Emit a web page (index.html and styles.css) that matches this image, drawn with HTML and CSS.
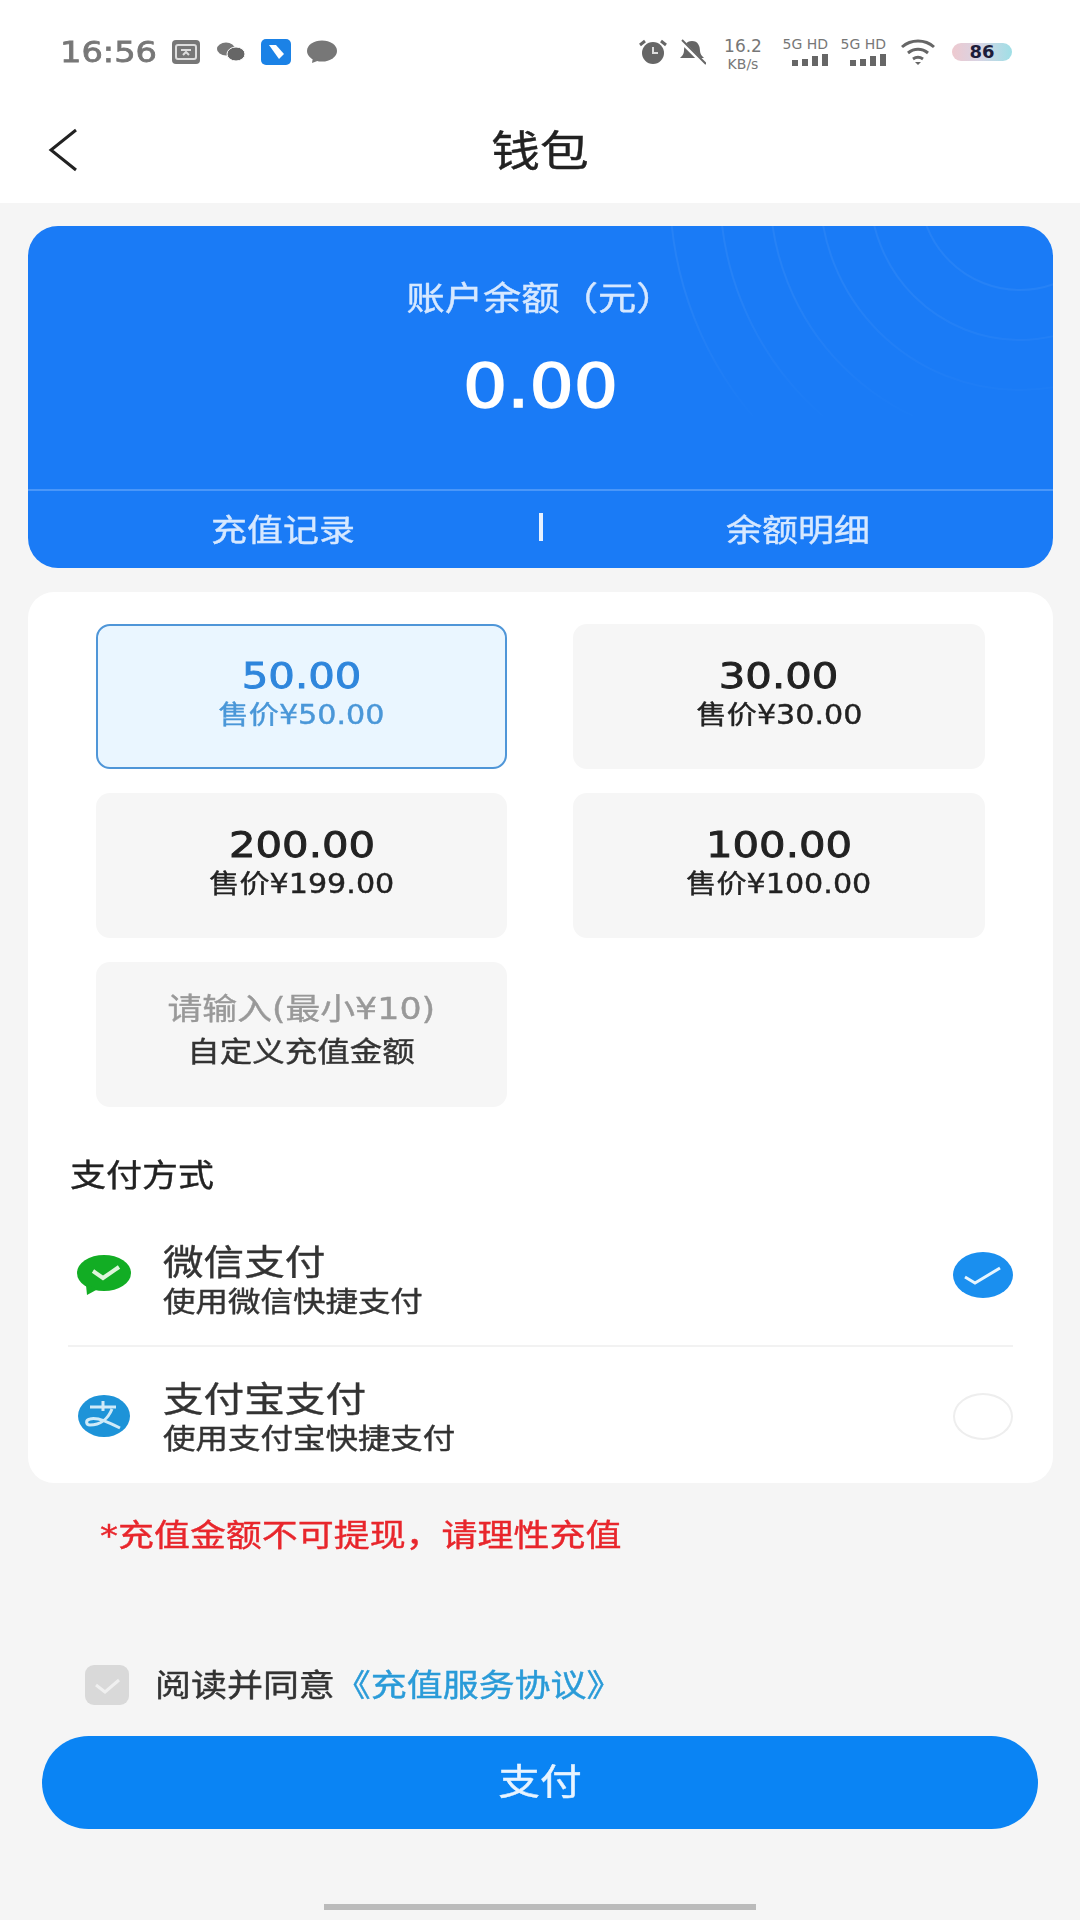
FILE: index.html
```html
<!DOCTYPE html>
<html lang="zh-CN">
<head>
    <meta charset="UTF-8">
    <meta name="viewport" content="width=device-width, initial-scale=1.0">
    <title>钱包</title>
    <link rel="stylesheet" href="styles.css">
</head>
<body>
    <!-- status bar -->
    <div class="status">
        <div class="status-left">
            <span class="time wide">16:56</span>
            <svg width="30" height="26" viewBox="0 0 30 26"><rect x="1" y="1" width="28" height="24" rx="4" fill="#777"/><rect x="5" y="6" width="20" height="14" rx="2" fill="none" stroke="#ddd" stroke-width="2"/><path d="M10 11h10M12 16l3-3 3 3" fill="none" stroke="#ddd" stroke-width="2"/></svg>
            <svg width="30" height="20" viewBox="0 0 30 20"><ellipse cx="10" cy="7" rx="9" ry="6.5" fill="#777"/><ellipse cx="20" cy="12" rx="9" ry="7" fill="#666" stroke="#fff"/></svg>
            <svg width="30" height="26" viewBox="0 0 30 26"><rect width="30" height="26" rx="5" fill="#1b82e6"/><path d="M8 6l7 0 8 9-5 5z" fill="#fff"/></svg>
            <svg width="32" height="24" viewBox="0 0 32 24"><ellipse cx="16" cy="11" rx="15" ry="10.5" fill="#777"/><path d="M7 17l-1 6 8-3z" fill="#777"/></svg>
        </div>
        <div class="status-right">
            <svg width="30" height="26" viewBox="0 0 30 26"><circle cx="15" cy="14" r="11" fill="#666"/><path d="M15 8v6h5" fill="none" stroke="#ddd" stroke-width="2"/><path d="M2 6l5-4M28 6l-5-4" stroke="#666" stroke-width="3"/></svg>
            <svg width="28" height="26" viewBox="0 0 28 26"><path d="M14 2c-6 0-8 5-8 10 0 3-2 5-4 7h24c-2-2-4-4-4-7 0-5-2-10-8-10z" fill="#666"/><path d="M3 2l23 23" stroke="#fff" stroke-width="4"/><path d="M4 1l24 24" stroke="#666" stroke-width="2"/></svg>
            <div class="speed"><span>16.2</span><span>KB/s</span></div>
            <div class="sim"><span>5G HD</span><svg width="36" height="12" viewBox="0 0 36 12"><rect x="0" y="6" width="6" height="6" fill="#666"/><rect x="10" y="5" width="6" height="7" fill="#666"/><rect x="20" y="2" width="6" height="10" fill="#666"/><rect x="30" y="0" width="6" height="12" fill="#666"/></svg></div>
            <div class="sim"><span>5G HD</span><svg width="36" height="12" viewBox="0 0 36 12"><rect x="0" y="6" width="6" height="6" fill="#666"/><rect x="10" y="5" width="6" height="7" fill="#666"/><rect x="20" y="2" width="6" height="10" fill="#666"/><rect x="30" y="0" width="6" height="12" fill="#666"/></svg></div>
            <svg width="36" height="26" viewBox="0 0 36 26"><path d="M2 8c9-8 23-8 32 0M8 14c6-5 14-5 20 0M13 20c3-2 7-2 10 0" fill="none" stroke="#666" stroke-width="3"/><path d="M18 26l-3-3h6z" fill="#666"/></svg>
            <div class="battery">86</div>
        </div>
    </div>

    <div class="header">
        <svg class="back" width="30" height="44" viewBox="0 0 30 44"><path d="M28 2L3 22l25 20" fill="none" stroke="#222" stroke-width="3"/></svg>
        <div class="title wide">钱包</div>
        <div></div>
    </div>

    <div class="hero">
        <svg class="hero-waves" width="1025" height="342" viewBox="0 0 1025 342">
            <g fill="none" stroke="#fff" stroke-opacity="0.055" stroke-width="2">
                <circle cx="992" cy="-36" r="100"/>
                <circle cx="992" cy="-36" r="150"/>
                <circle cx="992" cy="-36" r="200"/>
                <circle cx="992" cy="-36" r="250"/>
                <circle cx="992" cy="-36" r="300"/>
                <circle cx="992" cy="-36" r="350"/>
            </g>
        </svg>
        <div class="hero-main">
            <div class="hero-label wide">账户余额（元）</div>
            <div class="hero-amount wide">0.00</div>
        </div>
        <div class="hero-foot">
            <div class="wide">充值记录</div>
            <div class="hero-sep"></div>
            <div class="wide">余额明细</div>
        </div>
    </div>

    <div class="panel">
        <div class="tiles">
            <div class="tile active">
                <div class="tile-num wide">50.00</div>
                <div class="tile-sub wide">售价¥50.00</div>
            </div>
            <div class="tile">
                <div class="tile-num wide">30.00</div>
                <div class="tile-sub wide">售价¥30.00</div>
            </div>
            <div class="tile">
                <div class="tile-num wide">200.00</div>
                <div class="tile-sub wide">售价¥199.00</div>
            </div>
            <div class="tile">
                <div class="tile-num wide">100.00</div>
                <div class="tile-sub wide">售价¥100.00</div>
            </div>
            <div class="tile custom">
                <div class="tile-hint wide">请输入(最小¥10)</div>
                <div class="tile-note wide">自定义充值金额</div>
            </div>
        </div>

        <div class="pay-title"><span class="wide">支付方式</span></div>

        <div class="pay-row line">
            <svg class="pay-icon" width="56" height="40" viewBox="0 0 56 40"><ellipse cx="28" cy="18" rx="27" ry="18" fill="#12ad24"/><path d="M10 30l1 10 11-6z" fill="#12ad24"/><path d="M17 16l10 7 16-11" fill="none" stroke="#dff5dc" stroke-width="4"/></svg>
            <div class="pay-text">
                <div class="pay-name"><span class="wide">微信支付</span></div>
                <div class="pay-desc"><span class="wide">使用微信快捷支付</span></div>
            </div>
            <svg width="60" height="46" viewBox="0 0 60 46"><ellipse cx="30" cy="23" rx="30" ry="23" fill="#1a8fef"/><path d="M12 25l10 6 25-15" fill="none" stroke="#e6f5ff" stroke-width="3"/></svg>
        </div>
        <div class="pay-row">
            <svg class="pay-icon" width="56" height="42" viewBox="0 0 56 42"><ellipse cx="28" cy="21" rx="26" ry="21" fill="#1d93d8"/><path d="M14 12h26M27 6v10M36 14c-4 10-12 16-22 16-4 0-5-5 0-6 8-2 20 4 30 9" fill="none" stroke="#cfeaf8" stroke-width="3"/></svg>
            <div class="pay-text">
                <div class="pay-name"><span class="wide">支付宝支付</span></div>
                <div class="pay-desc"><span class="wide">使用支付宝快捷支付</span></div>
            </div>
            <div class="radio"></div>
        </div>
    </div>

    <div class="notice"><span class="wide">*充值金额不可提现，请理性充值</span></div>

    <div class="agree">
        <svg width="44" height="40" viewBox="0 0 44 40"><rect width="44" height="40" rx="9" fill="#d9d9d9"/><path d="M11 20l9 7 14-12" fill="none" stroke="#f0f0f0" stroke-width="3"/></svg>
        <span class="wide agree-text">阅读并同意<span class="agree-link">《充值服务协议》</span></span>
    </div>

    <div class="pay-btn"><span class="wide">支付</span></div>

    <div class="home-bar"></div>
</body>
</html>
```

FILE: styles.css
```css
* {
    box-sizing: border-box;
}
body {
    margin: 0;
    width: 1080px;
    height: 1920px;
    overflow: hidden;
    background-color: #f5f5f5;
    color: #222;
    font-family: "DejaVu Sans", "Noto Sans CJK SC", sans-serif;
}
/* the shot is stretched sideways, text has to follow */
.wide {
    display: inline-block;
    transform: scaleX(1.16);
    white-space: nowrap;
    -webkit-text-stroke: 0.4px currentColor;
}

/* status bar */
.status {
    height: 100px;
    padding: 38px 68px 0 60px;
    display: flex;
    align-items: flex-start;
    justify-content: space-between;
    background-color: #fff;
}
.status-left {
    display: flex;
    align-items: center;
    gap: 15px;
    height: 28px;
}
.time {
    font-size: 29px;
    line-height: 28px;
    color: #777;
    transform-origin: left center;
    margin-right: 12px;
    -webkit-text-stroke: 0.8px #777;
}
.status-right {
    display: flex;
    align-items: center;
    gap: 10px;
    height: 28px;
}
.speed {
    display: flex;
    flex-direction: column;
    font-size: 14px;
    color: #777;
    width: 44px;
    margin: 4px 5px 0;
    align-items: center;
}
.speed span:first-child {
    font-size: 17px;
}
.sim {
    width: 48px;
    display: flex;
    flex-direction: column;
    align-items: flex-end;
    gap: 4px;
    font-size: 14px;
    line-height: 12px;
    color: #777;
    white-space: nowrap;
}
.sim + .sim {
    margin-right: 4px;
}
.battery {
    width: 60px;
    height: 18px;
    margin-left: 6px;
    border-radius: 9px;
    background: linear-gradient(90deg, #eec9cf, #d8d4e4 45%, #9fdfe6);
    color: #1c1c3a;
    font-size: 18px;
    font-weight: bold;
    line-height: 18px;
    text-align: center;
}

/* nav */
.header {
    height: 103px;
    padding-left: 48px;
    display: grid;
    grid-template-columns: 1fr auto 1fr;
    align-items: center;
    background-color: #fff;
}
.back {
    margin-bottom: 4px;
}
.title {
    font-size: 42px;
    line-height: 50px;
    margin-right: 48px;
}

/* balance card */
.hero {
    position: relative;
    height: 342px;
    margin: 23px 27px 0 28px;
    border-radius: 30px;
    background-color: #1a7bf6;
    color: #fff;
    overflow: hidden;
}
.hero-waves {
    position: absolute;
    top: 0;
    left: 0;
    -webkit-mask-image: linear-gradient(to bottom, #000 20%, transparent 60%);
    mask-image: linear-gradient(to bottom, #000 20%, transparent 60%);
}
.hero-main {
    position: relative;
    height: 263px;
    padding-top: 51px;
    text-align: center;
}
.hero-label {
    display: block;
    font-size: 33px;
    line-height: 44px;
    color: #d6e8ff;
}
.hero-amount {
    display: block;
    margin-top: 27px;
    font-size: 60px;
    line-height: 76px;
    -webkit-text-stroke: 1.6px #fff;
}
.hero-foot {
    position: relative;
    height: 79px;
    padding-bottom: 5px;
    border-top: 2px solid #4a97f9;
    display: grid;
    grid-template-columns: 1fr 4px 1fr;
    align-items: center;
    justify-items: center;
    font-size: 31px;
    color: #d6e8ff;
}
.hero-sep {
    width: 4px;
    height: 28px;
    background-color: #e6f1ff;
}

/* recharge + payment card */
.panel {
    height: 891px;
    margin: 24px 27px 0 28px;
    padding: 32px 40px 0 40px;
    border-radius: 26px;
    background-color: #fff;
}
.tiles {
    display: grid;
    grid-template-columns: 411px 412px;
    grid-auto-rows: 145px;
    column-gap: 66px;
    row-gap: 24px;
    padding-left: 28px;
}
.tile {
    display: flex;
    flex-direction: column;
    align-items: center;
    justify-content: center;
    border-radius: 14px;
    background-color: #f6f6f6;
    padding-bottom: 8px;
}
.tile.active {
    background-color: #eaf6ff;
    border: 2px solid #4f96d8;
    color: #2f86dc;
}
.tile-num {
    font-size: 36px;
    line-height: 44px;
    -webkit-text-stroke: 0.9px currentColor;
}
.tile-sub {
    font-size: 26px;
    line-height: 34px;
}
.tile.active .tile-sub {
    color: #4a97d8;
}
.tile-hint {
    font-size: 30px;
    line-height: 44px;
    color: #999;
}
.tile-note {
    font-size: 28px;
    line-height: 44px;
    color: #333;
}
.pay-title {
    margin: 46px 0 0 2px;
    font-size: 31px;
    line-height: 44px;
}
.pay-title .wide,
.pay-name .wide,
.pay-desc .wide,
.notice .wide,
.agree-text {
    transform-origin: left center;
}
.pay-row {
    height: 138px;
    display: flex;
    align-items: center;
    padding-left: 8px;
}
.pay-row.line {
    height: 143px;
    margin-top: 7px;
    border-bottom: 2px solid #f2f2f2;
}
.pay-icon {
    flex: none;
}
.pay-text {
    flex: 1;
    margin-left: 31px;
    padding-top: 3px;
}
.pay-row.line .pay-text {
    padding-top: 12px;
}
.pay-name {
    font-size: 35px;
    line-height: 44px;
    color: #333;
}
.pay-desc {
    font-size: 28px;
    line-height: 36px;
    color: #333;
}
.radio {
    width: 60px;
    height: 47px;
    border: 2px solid #eee;
    border-radius: 50%;
}

.notice {
    margin: 30px 0 0 100px;
    font-size: 31px;
    line-height: 44px;
    color: #e8262c;
}
.agree {
    margin: 108px 0 0 85px;
    display: flex;
    align-items: center;
    gap: 26px;
    font-size: 31px;
    line-height: 40px;
    color: #333;
}
.agree-link {
    color: #2a9bd8;
}
.pay-btn {
    height: 93px;
    margin: 31px 42px 0 42px;
    border-radius: 47px;
    background-color: #0a84f4;
    color: #e8f4ff;
    font-size: 36px;
    line-height: 93px;
    text-align: center;
}
.home-bar {
    width: 432px;
    height: 6px;
    margin: 75px auto 0;
    background-color: #bbb;
}
```
